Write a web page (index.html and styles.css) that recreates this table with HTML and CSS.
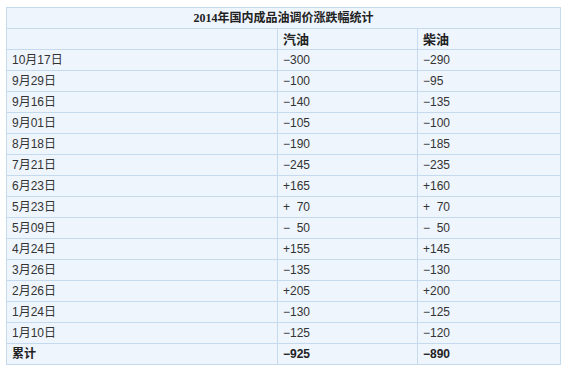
FILE: index.html
```html
<!DOCTYPE html>
<html>
<head>
    <title>2014年国内成品油调价涨跌幅统计</title>
    <link rel="stylesheet" href="styles.css">
</head>
<body>
    <table class="price-table">
        <colgroup>
            <col class="col-date">
            <col class="col-gas">
            <col class="col-diesel">
        </colgroup>
        <tr class="title-row">
            <th colspan="3">2014年国内成品油调价涨跌幅统计</th>
        </tr>
        <tr class="head-row">
            <td></td>
            <td>汽油</td>
            <td>柴油</td>
        </tr>
        <tr><td>10月17日</td><td>−300</td><td>−290</td></tr>
        <tr><td>9月29日</td><td>−100</td><td>−95</td></tr>
        <tr><td>9月16日</td><td>−140</td><td>−135</td></tr>
        <tr><td>9月01日</td><td>−105</td><td>−100</td></tr>
        <tr><td>8月18日</td><td>−190</td><td>−185</td></tr>
        <tr><td>7月21日</td><td>−245</td><td>−235</td></tr>
        <tr><td>6月23日</td><td>+165</td><td>+160</td></tr>
        <tr><td>5月23日</td><td>+  70</td><td>+  70</td></tr>
        <tr><td>5月09日</td><td>−  50</td><td>−  50</td></tr>
        <tr><td>4月24日</td><td>+155</td><td>+145</td></tr>
        <tr><td>3月26日</td><td>−135</td><td>−130</td></tr>
        <tr><td>2月26日</td><td>+205</td><td>+200</td></tr>
        <tr><td>1月24日</td><td>−130</td><td>−125</td></tr>
        <tr><td>1月10日</td><td>−125</td><td>−120</td></tr>
        <tr class="total-row">
            <td>累计</td>
            <td>−925</td>
            <td>−890</td>
        </tr>
    </table>
</body>
</html>
```

FILE: styles.css
```css
* {
    margin: 0;
    padding: 0;
    box-sizing: border-box;
}

body {
    background: #fff;
    padding: 7px 0 0 6px;
    font-family: "Liberation Sans", "Noto Sans CJK SC", sans-serif;
    font-size: 12px;
    color: #333;
}

.price-table {
    border-collapse: collapse;
    width: 555px;
    table-layout: fixed;
    background: #eef5fd;
}

.col-date {
    width: 271px;
}

.col-gas {
    width: 140px;
}

.price-table th,
.price-table td {
    border: 1px solid #c5d9ef;
    height: 21px;
    padding: 0 5px;
    text-align: left;
    white-space: pre;
    line-height: 19px;
}

.title-row th {
    text-align: center;
    font-weight: bold;
    font-family: "Liberation Serif", "Noto Sans CJK SC", serif;
    font-size: 12px;
    color: #222;
}

.head-row td {
    font-weight: bold;
    font-size: 13px;
    color: #222;
}

.total-row td {
    font-weight: bold;
    color: #222;
}
```
